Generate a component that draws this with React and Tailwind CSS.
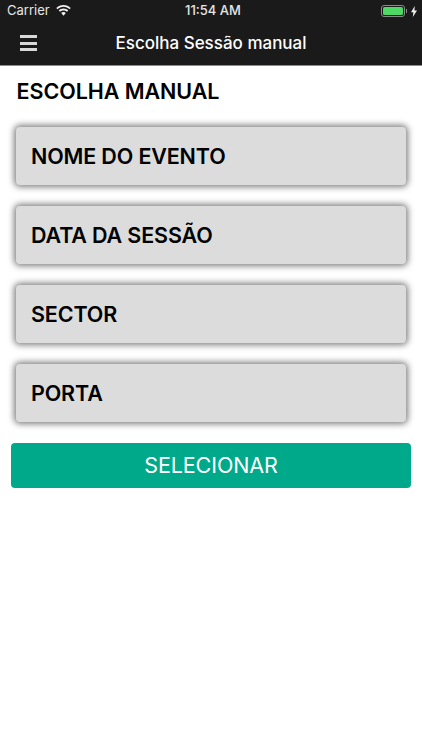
const fields = ['NOME DO EVENTO', 'DATA DA SESSÃO', 'SECTOR', 'PORTA'];

function StatusBar() {
  return (
    <div className="flex h-[22px] items-center justify-between bg-[#1a1a1a] pl-[7px] pr-[5px] text-[13px] text-[#e6e6e6]">
      <div className="flex flex-1 items-center gap-[6px]">
        <span>Carrier</span>
        <svg width="15" height="11" viewBox="0 0 15 11" fill="#f2f2f2" className="-mt-[2px]">
          <path d="M7.5 0C4.7 0 2.2 1.1.3 2.9l1.2 1.3C3 2.7 5.2 1.8 7.5 1.8s4.5.9 6 2.4l1.2-1.3C12.8 1.1 10.3 0 7.5 0z" />
          <path d="M7.5 3.6c-1.8 0-3.5.7-4.7 1.9L4 6.8c.9-.9 2.2-1.4 3.5-1.4s2.6.5 3.5 1.4l1.2-1.3C11 4.3 9.3 3.6 7.5 3.6z" />
          <path d="M7.5 7.1c-.9 0-1.7.3-2.3 1l2.3 2.6 2.3-2.6c-.6-.7-1.4-1-2.3-1z" />
        </svg>
      </div>
      <span className="pl-[2px] font-medium">11:54 AM</span>
      <div className="flex flex-1 items-center justify-end gap-[4px]">
        <div className="flex items-center">
          <div className="h-[12px] w-[24px] rounded-[3px] border border-[#8a8a8a] p-[1px]">
            <div className="h-full w-full rounded-[1.5px] bg-[#4cd964]" />
          </div>
          <div className="ml-[1px] h-[4px] w-[1px] bg-[#8a8a8a]" />
        </div>
        <svg width="6" height="11" viewBox="0 0 6 11" fill="#f2f2f2">
          <path d="M3.8 0 0 6.2h2.4L1.8 11 6 4.4H3.4z" />
        </svg>
      </div>
    </div>
  );
}

function NavBar() {
  return (
    <div className="relative flex h-[44px] items-center justify-center border-b border-[#8c8c8c] bg-[#1a1a1a]">
      <div className="absolute left-[20px] top-[13px] flex w-[17px] flex-col gap-[3.5px]">
        <div className="h-[3px] bg-[#d9d9d9]" />
        <div className="h-[3px] bg-[#d9d9d9]" />
        <div className="h-[3px] bg-[#d9d9d9]" />
      </div>
      <span className="text-[17px] font-medium text-white">Escolha Sessão manual</span>
    </div>
  );
}

export default function App() {
  return (
    <div className="min-h-[750px] bg-white font-['Inter','Liberation_Sans',sans-serif]">
      <StatusBar />
      <NavBar />
      <div className="px-[11px]">
        <h1 className="pl-[5.5px] pt-[11px] text-[21.5px] font-semibold leading-[28px] tracking-[-0.05px] text-black">ESCOLHA MANUAL</h1>
        <div className="mt-[22px] flex flex-col gap-[21px] px-[5px]">
          {fields.map((f) => (
            <div
              key={f}
              className="flex h-[58px] items-center rounded-[4px] bg-[#dcdcdc] pl-[15px] text-[21.5px] font-semibold tracking-[-0.15px] text-black shadow-[0_0_6px_2px_rgba(0,0,0,0.5)]"
            >
              {f}
            </div>
          ))}
        </div>
        <button className="mt-[21px] flex h-[44.5px] w-full items-center justify-center rounded-[4px] bg-[#00a98a] text-[21.5px] tracking-[-0.1px] text-white">
          SELECIONAR
        </button>
      </div>
    </div>
  );
}
